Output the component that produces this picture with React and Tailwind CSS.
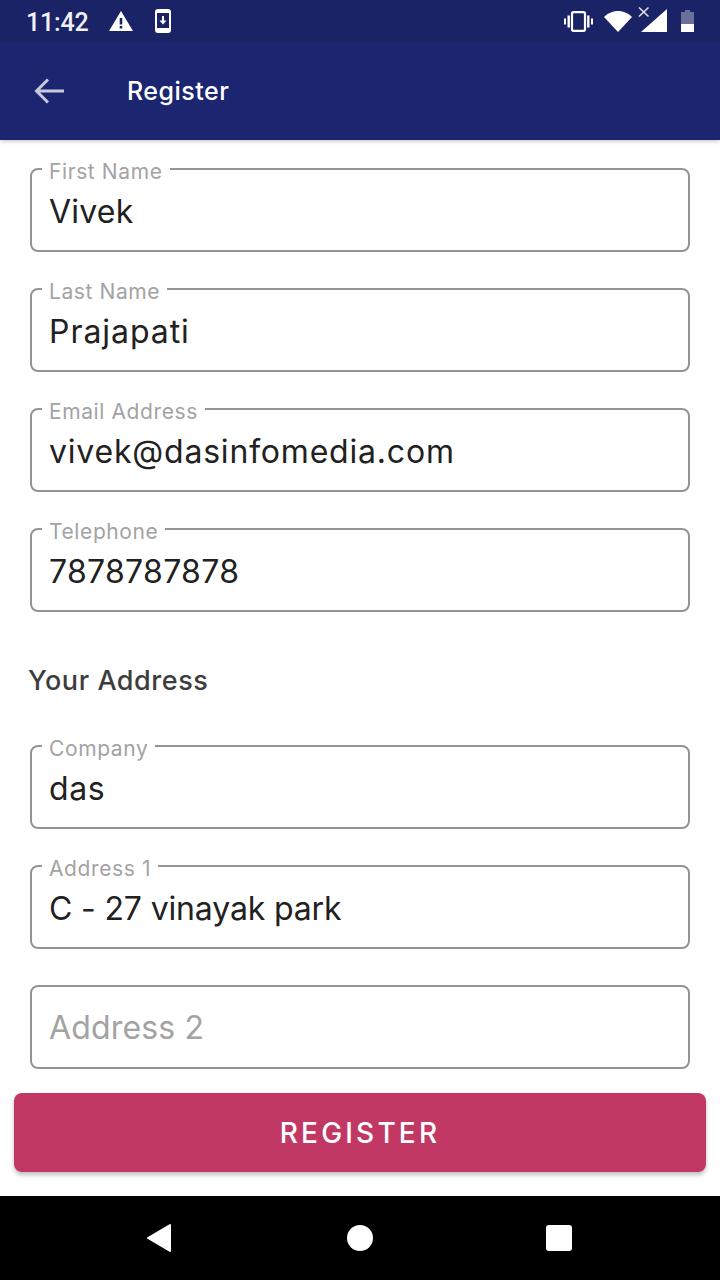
import React from 'react';

// outlined input with the label sitting in the notch of the border
const Field = ({ label, value, valueClass = 'tracking-[0.6px]', className = '' }) => (
  <div className={`relative h-[84px] rounded-[8px] border-2 border-[#949494] pl-[17px] flex items-center ${className}`}>
    {value && (
      <span className="absolute left-[10px] top-[-11px] bg-white px-[7px] text-[21px] leading-[26px] tracking-[0.6px] text-[#a3a3a3]">{label}</span>
    )}
    {value ? (
      <span className={`text-[32px] leading-[40px] text-[#212121] mt-[3px] ${valueClass}`}>{value}</span>
    ) : (
      <span className="text-[32px] leading-[40px] tracking-[0.15px] text-[#a3a3a3] mt-[2px]">{label}</span>
    )}
  </div>
);

const StatusBar = () => (
  <div className="h-[42px] bg-[#1a2366] flex items-center justify-between pl-[26px] pr-[26px] shrink-0">
    <div className="flex items-center">
      <span className="text-[25px] leading-[30px] font-medium tracking-[-0.2px] text-[#f0f1f7] font-['Roboto',sans-serif] mt-[3px]">11:42</span>
      <svg className="ml-[21px]" width="24" height="22" viewBox="0 0 24 22">
        <path fill="#fff" d="M12 1 L24 21 H0 Z M10.7 8 V14.5 H13.3 V8 Z M10.7 16 V18.5 H13.3 V16 Z" fillRule="evenodd" />
      </svg>
      <svg className="ml-[22px]" width="16" height="24" viewBox="0 0 16 24">
        <rect x="1" y="1" width="14" height="22" rx="2" fill="none" stroke="#fff" strokeWidth="2" />
        <rect x="1" y="2" width="14" height="2" fill="#fff" />
        <rect x="1" y="19" width="14" height="3" fill="#fff" />
        <path fill="#fff" d="M7 7 H9 V11.5 H11.5 L8 15.5 L4.5 11.5 H7 Z" />
      </svg>
    </div>
    <div className="flex items-center">
      <svg width="29" height="21" viewBox="0 0 29 21">
        <rect x="8" y="1.2" width="13" height="18.6" rx="1.5" fill="none" stroke="#fff" strokeWidth="2.2" />
        <rect x="3.5" y="4.5" width="2.4" height="12" fill="#fff" />
        <rect x="23.1" y="4.5" width="2.4" height="12" fill="#fff" />
        <rect x="0" y="7.5" width="2" height="6" fill="#fff" />
        <rect x="27" y="7.5" width="2" height="6" fill="#fff" />
      </svg>
      <svg className="ml-[11px]" width="28" height="21" viewBox="0 0 28 21">
        <path fill="#fff" d="M14 21 L0 6 C3.5 2.4 8.5 0 14 0 C19.5 0 24.5 2.4 28 6 Z" />
      </svg>
      <svg className="ml-[6px]" width="30" height="32" viewBox="0 0 30 32">
        <path stroke="#dfe1ee" strokeWidth="1.6" fill="none" d="M1 2.5 L10.5 11.5 M10.5 2.5 L1 11.5" />
        <path fill="#fff" d="M29 4 V27 H3 Z" />
      </svg>
      <svg className="ml-[13px]" width="13" height="22" viewBox="0 0 13 22">
        <path fill="#6a7099" d="M4 0 H9 V2 H13 V14 H0 V2 H4 Z" />
        <rect x="0" y="14" width="13" height="8" fill="#fff" />
      </svg>
    </div>
  </div>
);

const NavBar = () => (
  <div className="h-[84px] bg-black flex items-center shrink-0 pl-[146px]">
    <svg width="26" height="30" viewBox="0 0 26 30">
      <path fill="#fff" stroke="#fff" strokeWidth="2" strokeLinejoin="round" d="M24 2 V28 L2 15 Z" />
    </svg>
    <div className="ml-[175px] w-[26px] h-[26px] rounded-full bg-white" />
    <div className="ml-[173px] w-[26px] h-[26px] rounded-[3px] bg-white" />
  </div>
);

export default function App() {
  return (
    <div className="w-[720px] h-[1280px] flex flex-col bg-white overflow-hidden font-['Inter',sans-serif]">
      <StatusBar />
      <div className="h-[98px] bg-[#1c2670] flex items-center shrink-0 shadow-[0_1px_4px_rgba(0,0,0,0.25)] z-10">
        <svg className="ml-[34px]" width="30" height="30" viewBox="0 0 30 30">
          <path fill="none" stroke="#c6c8dc" strokeWidth="3" d="M30 15 H3 M14 3.5 L2.5 15 L14 26.5" />
        </svg>
        <span className="ml-[63px] text-[25px] leading-[30px] font-medium tracking-[0.5px] text-white">Register</span>
      </div>

      <div className="flex-1 flex flex-col min-h-0">
        <div className="px-[30px] pt-[28px]">
          <Field label="First Name" value="Vivek" valueClass="tracking-[0.2px]" />
          <Field label="Last Name" value="Prajapati" valueClass="tracking-[0.95px]" className="mt-[36px]" />
          <Field label="Email Address" value="vivek@dasinfomedia.com" valueClass="tracking-[0.8px]" className="mt-[36px]" />
          <Field label="Telephone" value="7878787878" valueClass="tracking-[0.3px]" className="mt-[36px]" />
          <h2 className="mt-[51px] ml-[-2px] text-[27px] leading-[36px] font-medium text-[#3d3d3d] tracking-[0.55px]">Your Address</h2>
          <Field label="Company" value="das" className="mt-[46px]" />
          <Field label="Address 1" value="C - 27 vinayak park" valueClass="tracking-[-0.15px]" className="mt-[36px]" />
          <Field label="Address 2" className="mt-[36px]" />
        </div>
        <div className="px-[14px] mt-[24px]">
          <button className="w-full h-[79px] rounded-[8px] bg-[#c23864] text-white text-[28px] font-medium tracking-[3.2px] shadow-[0_3px_4px_rgba(0,0,0,0.25)]">
            REGISTER
          </button>
        </div>
      </div>

      <NavBar />
    </div>
  );
}
